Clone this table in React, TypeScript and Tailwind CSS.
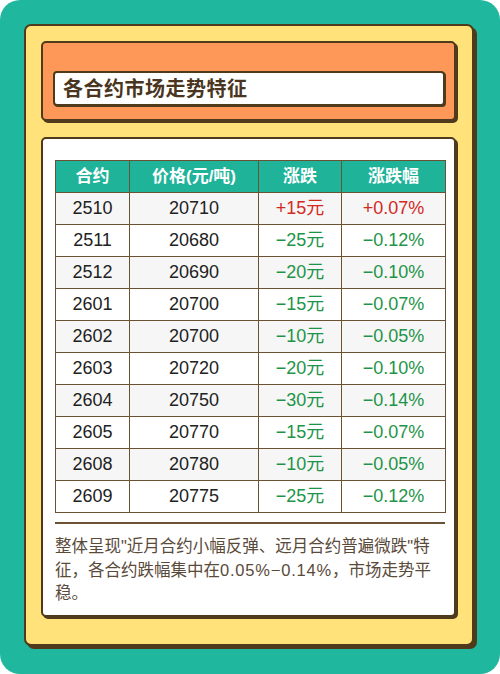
const rows = [
  { code: "2510", price: "20710", chg: "+15元", pct: "+0.07%", up: true },
  { code: "2511", price: "20680", chg: "−25元", pct: "−0.12%", up: false },
  { code: "2512", price: "20690", chg: "−20元", pct: "−0.10%", up: false },
  { code: "2601", price: "20700", chg: "−15元", pct: "−0.07%", up: false },
  { code: "2602", price: "20700", chg: "−10元", pct: "−0.05%", up: false },
  { code: "2603", price: "20720", chg: "−20元", pct: "−0.10%", up: false },
  { code: "2604", price: "20750", chg: "−30元", pct: "−0.14%", up: false },
  { code: "2605", price: "20770", chg: "−15元", pct: "−0.07%", up: false },
  { code: "2608", price: "20780", chg: "−10元", pct: "−0.05%", up: false },
  { code: "2609", price: "20775", chg: "−25元", pct: "−0.12%", up: false },
];

export default function App() {
  return (
    <div className="w-[500px] h-[674px] bg-white">
      <div
        className="w-[500px] h-[674px] rounded-[20px] bg-[#1fb89e] pl-[24px] pt-[24px]"
        style={{ fontFamily: '"Liberation Sans", "Noto Sans CJK SC", sans-serif' }}
      >
        {/* yellow frame */}
        <div className="w-[450px] h-[622px] rounded-[7px] border-2 border-[#4f3a1c] bg-[#ffe27a] shadow-[3px_3px_0_#4f3a1c] px-[15px] pt-[15px]">
          {/* header */}
          <div className="w-[415px] h-[80px] rounded-[5px] border-2 border-[#4f3a1c] bg-[#fd9858] shadow-[2px_2px_0_#4f3a1c] pl-[10px] pt-[28px]">
            <div className="w-[392px] h-[35px] rounded-[4px] border-2 border-[#4f3a1c] bg-white shadow-[1px_1px_0_#4f3a1c] flex items-center pl-[8px]">
              <span className="text-[20px] font-bold text-[#4a3520] tracking-[0.5px]">
                各合约市场走势特征
              </span>
            </div>
          </div>

          {/* content card */}
          <div className="mt-[16px] w-[415px] h-[480px] rounded-[5px] border-2 border-[#4f3a1c] bg-white shadow-[2px_2px_0_#4f3a1c] pl-[12px] pt-[21px]">
            <table className="w-[390px] border-collapse table-fixed">
              <colgroup>
                <col className="w-[74px]" />
                <col className="w-[129px]" />
                <col className="w-[83px]" />
                <col className="w-[104px]" />
              </colgroup>
              <thead>
                <tr className="h-[32px] bg-[#1fb39a] text-white text-[17px]">
                  <th className="border border-[#6b5232] font-bold">合约</th>
                  <th className="border border-[#6b5232] font-bold">价格(元/吨)</th>
                  <th className="border border-[#6b5232] font-bold">涨跌</th>
                  <th className="border border-[#6b5232] font-bold">涨跌幅</th>
                </tr>
              </thead>
              <tbody>
                {rows.map((r, i) => (
                  <tr
                    key={r.code}
                    className={`h-[32px] text-[18px] text-center ${i % 2 === 0 ? "bg-[#f6f6f6]" : "bg-white"}`}
                  >
                    <td className="border border-[#6b5232] text-[#222222]">{r.code}</td>
                    <td className="border border-[#6b5232] text-[#222222]">{r.price}</td>
                    <td className={`border border-[#6b5232] ${r.up ? "text-[#d42a1e]" : "text-[#1e9448]"}`}>
                      {r.chg}
                    </td>
                    <td className={`border border-[#6b5232] ${r.up ? "text-[#d42a1e]" : "text-[#1e9448]"}`}>
                      {r.pct}
                    </td>
                  </tr>
                ))}
              </tbody>
            </table>

            <div className="mt-[9px] w-[390px] h-[2px] bg-[#6b5232]" />
            <p className="mt-[11px] w-[390px] text-[16.5px] leading-[23.5px] text-[#5a4a3a]">
              整体呈现"近月合约小幅反弹、远月合约普遍微跌"特征，各合约跌幅集中在<span className="tracking-[0.8px]">0.05%−0.14%</span>，市场走势平稳。
            </p>
          </div>
        </div>
      </div>
    </div>
  );
}
